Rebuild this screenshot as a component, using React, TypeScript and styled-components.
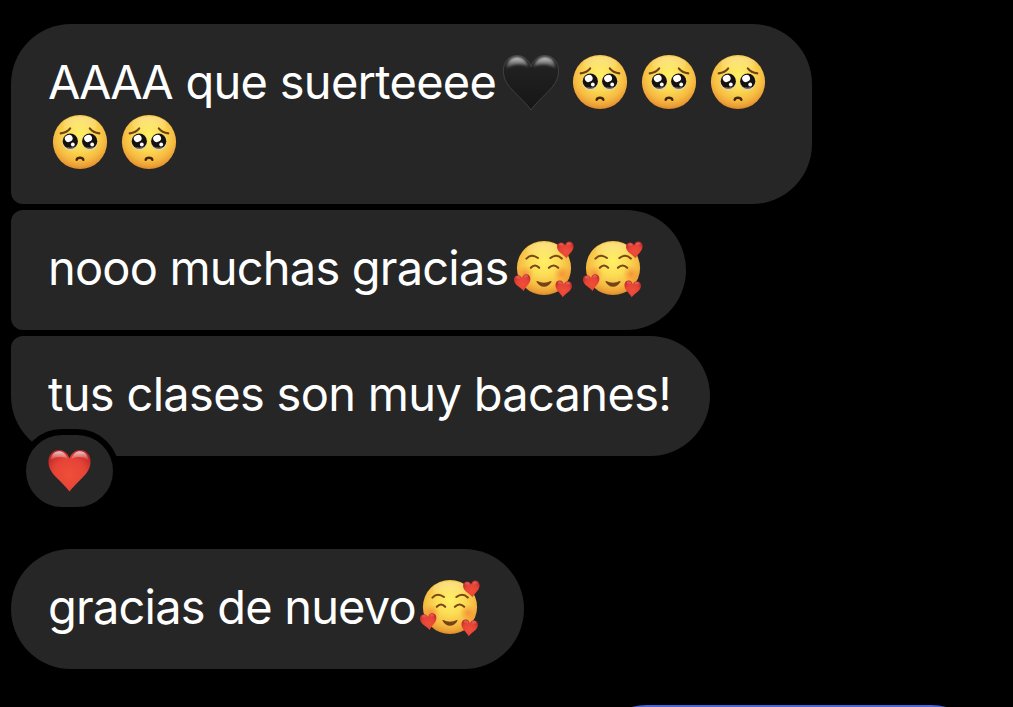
import React from 'react';
import styled, { createGlobalStyle } from 'styled-components';

const GlobalStyle = createGlobalStyle`
  * { box-sizing: border-box; }
  body { margin: 0; background: #000; overflow: hidden; }
`;

const Chat = styled.main`
  height: 707px;
  padding: 24px 22px 0 11px;
  display: flex;
  flex-direction: column;
  align-items: flex-start;
  gap: 6px;
  overflow: hidden;
  background: #000;
  color: #fff;
  font-family: Inter, 'Liberation Sans', sans-serif;
  font-size: 47px;
  line-height: 60px;
`;

const Bubble = styled.div<{ $radius: string; $after?: number; $end?: number }>`
  position: relative;
  flex: none;
  padding: 28px ${(p) => p.$end ?? 37}px 32px 37px;
  border-radius: ${(p) => p.$radius};
  margin-bottom: ${(p) => p.$after ?? 0}px;
  background: #262626;
`;

const Line = styled.div`
  display: flex;
  height: 60px;
  white-space: pre;
`;

const Words = styled.span<{ $width: number; $tracking: number }>`
  width: ${(p) => p.$width}px;
  letter-spacing: ${(p) => p.$tracking}px;
`;

const Capitals = styled.span`
  letter-spacing: -2px;
  word-spacing: 2.4px;
`;

const Glyph = styled.svg`
  display: block;
  flex: none;
  width: 69px;
  height: 60px;
  overflow: visible;
`;

const Reaction = styled.div`
  position: absolute;
  left: 9px;
  top: 93px;
  width: 99px;
  height: 84px;
  display: flex;
  align-items: center;
  justify-content: center;
  border: 6px solid #000;
  border-radius: 42px;
  background: #262626;
`;

const ReactionHeart = styled.svg`
  display: block;
  width: 43px;
  height: 42px;
`;

const SentBubble = styled.div`
  flex: none;
  align-self: flex-end;
  width: 404px;
  height: 120px;
  margin-top: 30px;
  border-radius: 60px;
  background: #4a67d8;
`;

const Gradients = styled.svg`
  position: absolute;
  width: 0;
  height: 0;
`;

const HEART =
  'M28 55.4C24 49.5 18 44 11.5 37.5C4.5 30.5 0 24.5 0 15.5C0 6 6 0 14 0C20.5 0 25.5 4 28 11.4C30.5 4 35.5 0 42 0C50 0 56 6 56 15.5C56 24.5 51.5 30.5 44.5 37.5C38 44 32 49.5 28 55.4Z';

function Defs() {
  return (
    <Gradients aria-hidden>
      <defs>
        <radialGradient id="skin" cx="0.5" cy="0.38" r="0.64">
          <stop offset="0" stopColor="#fff066" />
          <stop offset="0.4" stopColor="#fbdd55" />
          <stop offset="0.72" stopColor="#f6bc42" />
          <stop offset="0.88" stopColor="#eca035" />
          <stop offset="1" stopColor="#d98029" />
        </radialGradient>
        <linearGradient id="shine" x1="0" y1="0" x2="0" y2="1">
          <stop offset="0" stopColor="#fff" stopOpacity="0.3" />
          <stop offset="1" stopColor="#fff" stopOpacity="0" />
        </linearGradient>
        <radialGradient id="blush">
          <stop offset="0" stopColor="#f4692a" stopOpacity="0.55" />
          <stop offset="1" stopColor="#f4802a" stopOpacity="0" />
        </radialGradient>
        <radialGradient id="red" cx="0.5" cy="0.6" r="0.65">
          <stop offset="0" stopColor="#f04f3a" />
          <stop offset="0.6" stopColor="#e64336" />
          <stop offset="1" stopColor="#bd2627" />
        </radialGradient>
        <linearGradient id="black" x1="0" y1="0" x2="0" y2="1">
          <stop offset="0" stopColor="#303030" />
          <stop offset="0.25" stopColor="#202020" />
          <stop offset="1" stopColor="#161616" />
        </linearGradient>
        <linearGradient id="gloss" x1="0" y1="0" x2="0" y2="1">
          <stop offset="0" stopColor="#fff" stopOpacity="0.75" />
          <stop offset="1" stopColor="#fff" stopOpacity="0" />
        </linearGradient>
        <filter id="soften" x="-20%" y="-30%" width="140%" height="160%">
          <feGaussianBlur stdDeviation="1" />
        </filter>
      </defs>
    </Gradients>
  );
}

function Face() {
  return (
    <>
      <circle cx="32" cy="30" r="27.1" fill="url(#skin)" />
      <ellipse cx="32" cy="12.5" rx="17" ry="8" fill="url(#shine)" />
    </>
  );
}

function Eye({ x }: { x: number }) {
  return (
    <g transform={`translate(${x} 29.2)`}>
      <ellipse cy="0.9" rx="8" ry="8.3" fill="#e6d3a6" />
      <circle r="7.6" fill="#15110f" />
      <path d="M-5 5.4Q0 9 5 5.4Q0 7.6-5 5.4Z" fill="#fff" opacity="0.5" />
      <ellipse cx="-1.6" cy="-2.8" rx="4" ry="3.5" transform="rotate(-25 -1.6 -2.8)" fill="#fff" />
      <circle cx="2.5" cy="3.3" r="1.9" fill="#fff" />
    </g>
  );
}

function Pleading() {
  return (
    <Glyph viewBox="0 0 69 60">
      <Face />
      <g fill="none" stroke="#714018" strokeLinecap="round" strokeWidth="2.1">
        <path d="M12.7 21.4Q19 20.7 22.2 16.4" />
        <path d="M51.3 21.4Q45 20.7 41.8 16.4" />
      </g>
      <Eye x={22.3} />
      <Eye x={41.7} />
      <path d="M28.7 47.7Q29.2 45.8 32 45.8Q34.8 45.8 35.3 47.7" fill="none" stroke="#442610" strokeWidth="2.5" strokeLinecap="round" />
    </Glyph>
  );
}

function Gloss() {
  return (
    <g fill="url(#gloss)" filter="url(#soften)">
      <path d="M3 14C3.5 5 8.5 1.5 14 1.5C19 1.5 23.5 5 25.5 12C20 8 9 8 3 14Z" />
      <path d="M53 14C52.5 5 47.5 1.5 42 1.5C37 1.5 32.5 5 30.5 12C36 8 47 8 53 14Z" />
    </g>
  );
}

function SmallHeart({ x, y, turn }: { x: number; y: number; turn: number }) {
  return (
    <g transform={`translate(${x} ${y}) rotate(${turn}) scale(0.295) translate(-28 -27.7)`}>
      <path d={HEART} fill="url(#red)" />
      <ellipse cx="14" cy="9" rx="8" ry="6" fill="url(#gloss)" opacity="0.4" />
      <ellipse cx="42" cy="9" rx="8" ry="6" fill="url(#gloss)" opacity="0.4" />
    </g>
  );
}

function Loving() {
  return (
    <Glyph viewBox="0 0 69 60">
      <Face />
      <circle cx="13.5" cy="36" r="8.5" fill="url(#blush)" />
      <circle cx="50" cy="36" r="8.5" fill="url(#blush)" />
      <g fill="none" stroke="#7a4518" strokeLinecap="round" strokeWidth="2.1">
        <path d="M14.4 20.6Q19.5 15.2 26 20" />
        <path d="M38.4 20Q44.5 15.2 49.8 20.6" />
        <path d="M18.8 29.8Q23 25.2 27.2 29.8" />
        <path d="M36.9 29.8Q41.7 25.2 46.2 29.8" />
      </g>
      <path d="M25.2 42.9Q32 46.5 38.8 42.9Q39.9 42.8 39.4 44Q36.6 48.7 32 48.7Q27.4 48.7 24.6 44Q24.1 42.8 25.2 42.9Z" fill="#75421a" />
      <SmallHeart x={53.7} y={12.1} turn={-6} />
      <SmallHeart x={10.6} y={44.8} turn={-7} />
      <SmallHeart x={51.4} y={51} turn={5} />
    </Glyph>
  );
}

function BlackHeart() {
  return (
    <Glyph viewBox="0 0 69 60">
      <g transform="translate(4.4 3.5) scale(0.985)">
        <path d={HEART} fill="url(#black)" stroke="#444" strokeWidth="0.9" />
        <Gloss />
      </g>
    </Glyph>
  );
}

export default function App() {
  return (
    <>
      <GlobalStyle />
      <Defs />
      <Chat>
        <Bubble $radius="60px 60px 60px 12px">
          <Line>
            <Words $width={451} $tracking={-0.72}>
              <Capitals>AAAA </Capitals>que suerteeee
            </Words>
            <BlackHeart />
            <Pleading />
            <Pleading />
            <Pleading />
          </Line>
          <Line>
            <Pleading />
            <Pleading />
          </Line>
        </Bubble>
        <Bubble $radius="12px 60px 60px 12px" $end={36}>
          <Line>
            <Words $width={464} $tracking={-0.81}>nooo muchas gracias</Words>
            <Loving />
            <Loving />
          </Line>
        </Bubble>
        <Bubble $radius="12px 60px 60px 60px" $after={87}>
          <Line>
            <Words $width={625} $tracking={-0.68}>tus clases son muy bacanes!</Words>
          </Line>
          <Reaction>
            <ReactionHeart viewBox="-0.5 0 57 56">
              <path d={HEART} fill="url(#red)" />
              <Gloss />
            </ReactionHeart>
          </Reaction>
        </Bubble>
        <Bubble $radius="60px">
          <Line>
            <Words $width={370} $tracking={-0.8}>gracias de nuevo</Words>
            <Loving />
          </Line>
        </Bubble>
        <SentBubble />
      </Chat>
    </>
  );
}
